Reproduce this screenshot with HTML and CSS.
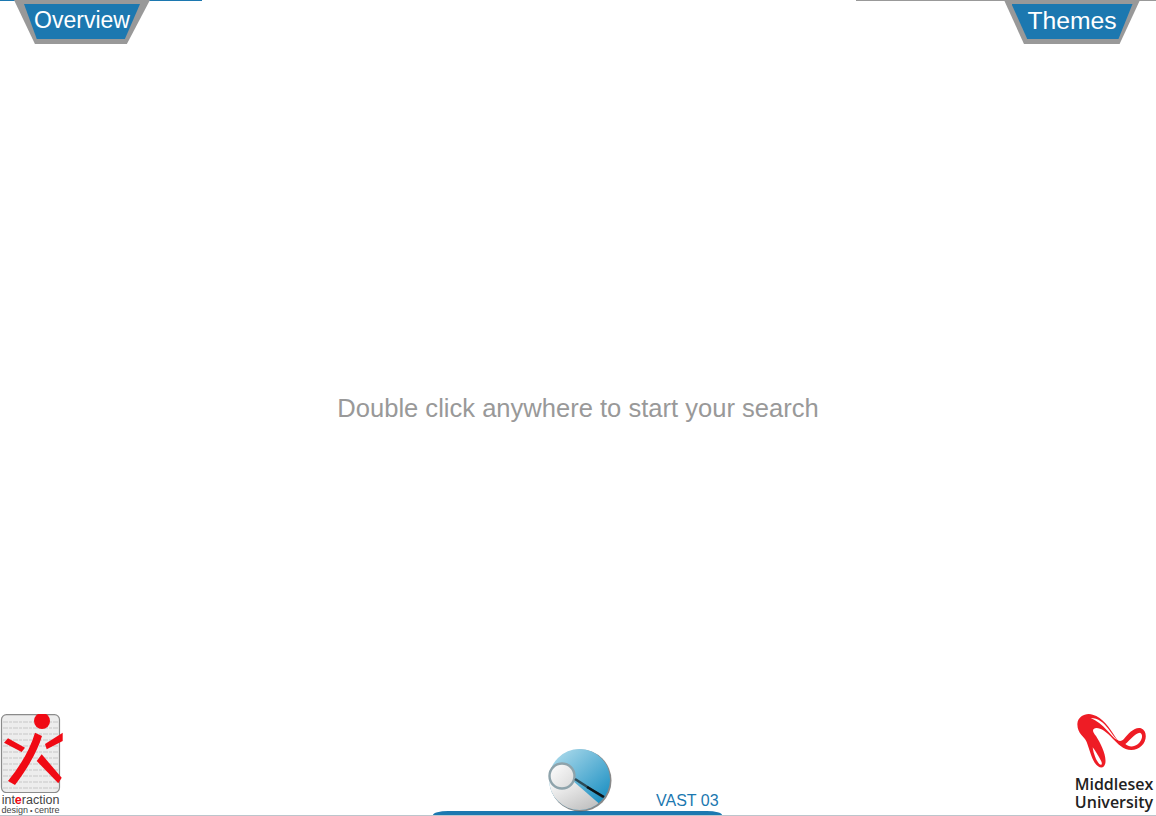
FILE: index.html
```html
<!DOCTYPE html>
<html>

<head>
	<title>VAST 03</title>
	<link rel="stylesheet" href="styles.css">
</head>

<body>
	<div class="page">

		<div class="top_bar">
			<div class="top_left">
				<div class="tab tab_overview"><span class="tab_text">Overview</span></div>
			</div>
			<div class="top_right">
				<div class="tab tab_themes"><span class="tab_text">Themes</span></div>
			</div>
		</div>

		<div class="message">Double click anywhere to start your search</div>

		<div class="bottom_bar">
			<div class="logo_left">
				<svg class="logo_mark" width="63" height="79" viewBox="0 0 63 79">
					<rect x="1.5" y="0.6" width="58" height="78" rx="5" fill="#ededed" stroke="#8b8b8b" stroke-width="1.2" />
					<path d="M3 8H58M3 14H58M3 20H58M3 26H58M3 32H58M3 38H58M3 44H58M3 50H58M3 56H58M3 62H58M3 68H58M3 74H58" stroke="#d4d4d4" stroke-width="1.6" stroke-dasharray="5 1 3 1" />
					<circle cx="42" cy="7" r="8" fill="#f00a14" />
					<path d="M35 18.7L42 22C38 36 28 54 15 71L8 67C20 52 30 36 35 18.7Z" fill="#f00a14" />
					<path d="M4 28.7L8 24.3L25 33.7L21.7 38Z" fill="#f00a14" />
					<path d="M45 30L62.7 18.7V27L46.7 35.3Z" fill="#f00a14" />
					<path d="M36.7 47L41.7 40.3L61.7 63.7L58.3 69.3Z" fill="#f00a14" />
				</svg>
				<div class="logo_line1">int<span class="logo_red">e</span>raction</div>
				<div class="logo_line2">design<span class="logo_dot">•</span>centre</div>
			</div>

			<div class="center_block">
				<div class="center_row">
					<div></div>
					<svg class="magnifier" width="66" height="64" viewBox="0 0 66 64">
						<defs>
							<linearGradient id="disc_blue" x1="0.2" y1="0" x2="0.9" y2="0.8">
								<stop offset="0" stop-color="#a8d8ea" />
								<stop offset="1" stop-color="#2293c4" />
							</linearGradient>
							<linearGradient id="disc_grey" x1="0.2" y1="0.2" x2="0.7" y2="1">
								<stop offset="0" stop-color="#f6f6f6" />
								<stop offset="1" stop-color="#b8b8b8" />
							</linearGradient>
							<linearGradient id="lens_fill" x1="0" y1="0" x2="1" y2="1">
								<stop offset="0" stop-color="#fff" />
								<stop offset="1" stop-color="#d8d8d8" />
							</linearGradient>
							<clipPath id="disc_clip">
								<circle cx="32.5" cy="31.5" r="30.5" />
							</clipPath>
						</defs>
						<circle cx="33.5" cy="32.5" r="31" fill="#4a4a4a" opacity="0.65" />
						<circle cx="32.5" cy="31.5" r="30.5" fill="url(#disc_blue)" />
						<path d="M0 24L26 33L56 59L40 70H0Z" fill="url(#disc_grey)" clip-path="url(#disc_clip)" />
						<circle cx="15" cy="28" r="12.5" fill="url(#lens_fill)" stroke="#8ea3ab" stroke-width="2.4" />
						<path d="M28 31L56 49" stroke="#2c4a56" stroke-width="2.6" />
						<path d="M40 39L57 49" stroke="#0c1418" stroke-width="2.4" />
					</svg>
					<div class="vast">VAST 03</div>
				</div>
				<div class="pill"></div>
			</div>

			<div class="logo_right">
				<svg class="logo_mark" width="80" height="57" viewBox="0 9 240 171">
					<path d="M16 42C18 18 42 8 62 14C92 22 112 52 128 78C136 92 144 98 155 88C170 70 188 50 207 55C226 62 226 92 208 108C192 124 164 124 146 108C130 96 114 74 96 62C84 54 72 52 66 56C60 60 64 68 72 78C86 100 104 135 100 160C96 178 80 176 68 158C58 142 52 118 44 96C38 80 16 72 16 42Z" fill="#ee1c25" />
					<path d="M56 24C78 24 96 38 110 58C120 72 128 84 136 90C126 86 116 72 104 60C90 44 74 32 56 24Z" fill="#fff" />
					<path d="M62 112C70 122 78 136 87 152C92 162 89 167 82 162C72 152 65 132 62 112Z" fill="#fff" />
					<path d="M160 102C172 92 188 70 204 68C214 72 212 90 198 102C186 112 170 112 160 102Z" fill="#fff" />
				</svg>
				<div class="uni_name">Middlesex<br>University</div>
			</div>
		</div>

	</div>
</body>

</html>
```

FILE: styles.css
```css
body {
	margin: 0;
	background-color: #fff;
	font-family: "Liberation Sans", Arial, sans-serif;
}

.page {
	display: grid;
	grid-template-rows: 103px 1fr 103px;
	height: 816px;
	overflow: hidden;
}

.top_bar {
	display: flex;
	justify-content: space-between;
	align-items: flex-start;
}

.top_left {
	width: 202px;
	height: 1px;
	padding-left: 14px;
	box-sizing: border-box;
	background-color: #1c78b0;
}

.top_right {
	width: 300px;
	height: 1px;
	padding-left: 148px;
	box-sizing: border-box;
	background-color: #999;
}

.tab {
	display: flex;
	justify-content: center;
	align-items: center;
	width: 136px;
	height: 44px;
	padding: 4px 0 5px;
	box-sizing: border-box;
	background-color: #999;
}

.tab_text {
	display: flex;
	justify-content: center;
	align-items: center;
	height: 35px;
	padding-bottom: 2px;
	box-sizing: border-box;
	color: #fff;
	background-color: #1c78b0;
}

.tab_overview {
	clip-path: polygon(0 0, 100% 0, 83% 100%, 15.4% 100%);
}

.tab_overview .tab_text {
	width: 116px;
	font-size: 23px;
	clip-path: polygon(0 0, 100% 0, 87% 100%, 11% 100%);
}

.tab_themes {
	clip-path: polygon(0 0, 100% 0, 85% 100%, 14.7% 100%);
}

.tab_themes .tab_text {
	width: 121px;
	font-size: 24.7px;
	clip-path: polygon(0 0, 100% 0, 88.4% 100%, 13% 100%);
}

.message {
	align-self: center;
	text-align: center;
	font-size: 25.55px;
	color: #999;
}

.bottom_bar {
	display: grid;
	grid-template-columns: 1fr 298px 1fr;
	align-items: end;
	border-bottom: 1px solid #bcc5cc;
	box-sizing: border-box;
	overflow: hidden;
}

.logo_left {
	justify-self: start;
	width: 61px;
	color: #444;
}

.logo_mark {
	display: block;
}

.logo_line1 {
	margin-top: 2px;
	font-size: 12.5px;
	line-height: 11px;
	text-align: center;
	white-space: nowrap;
}

.logo_red {
	color: #f00a14;
	font-weight: bold;
}

.logo_line2 {
	font-size: 9px;
	line-height: 9px;
	text-align: center;
	white-space: nowrap;
}

.logo_dot {
	margin: 0 2px;
	font-size: 7px;
}

.center_row {
	display: grid;
	grid-template-columns: 118px 66px 1fr;
	align-items: end;
}

.magnifier {
	display: block;
	margin-bottom: -1px;
}

.vast {
	margin-left: 43px;
	padding-bottom: 1px;
	font-size: 16px;
	line-height: 18px;
	color: #1c78b0;
	white-space: nowrap;
}

.pill {
	height: 4px;
	margin: 0 5px 0 4px;
	background-color: #1c78b0;
	border-radius: 15px 15px 0 0 / 4px 4px 0 0;
}

.logo_right {
	justify-self: end;
	width: 84px;
	padding-bottom: 4px;
}

.uni_name {
	margin-top: 5px;
	font-family: "Open Sans", sans-serif;
	font-size: 16px;
	font-weight: 600;
	line-height: 18px;
	text-align: center;
	color: #222;
}
```
